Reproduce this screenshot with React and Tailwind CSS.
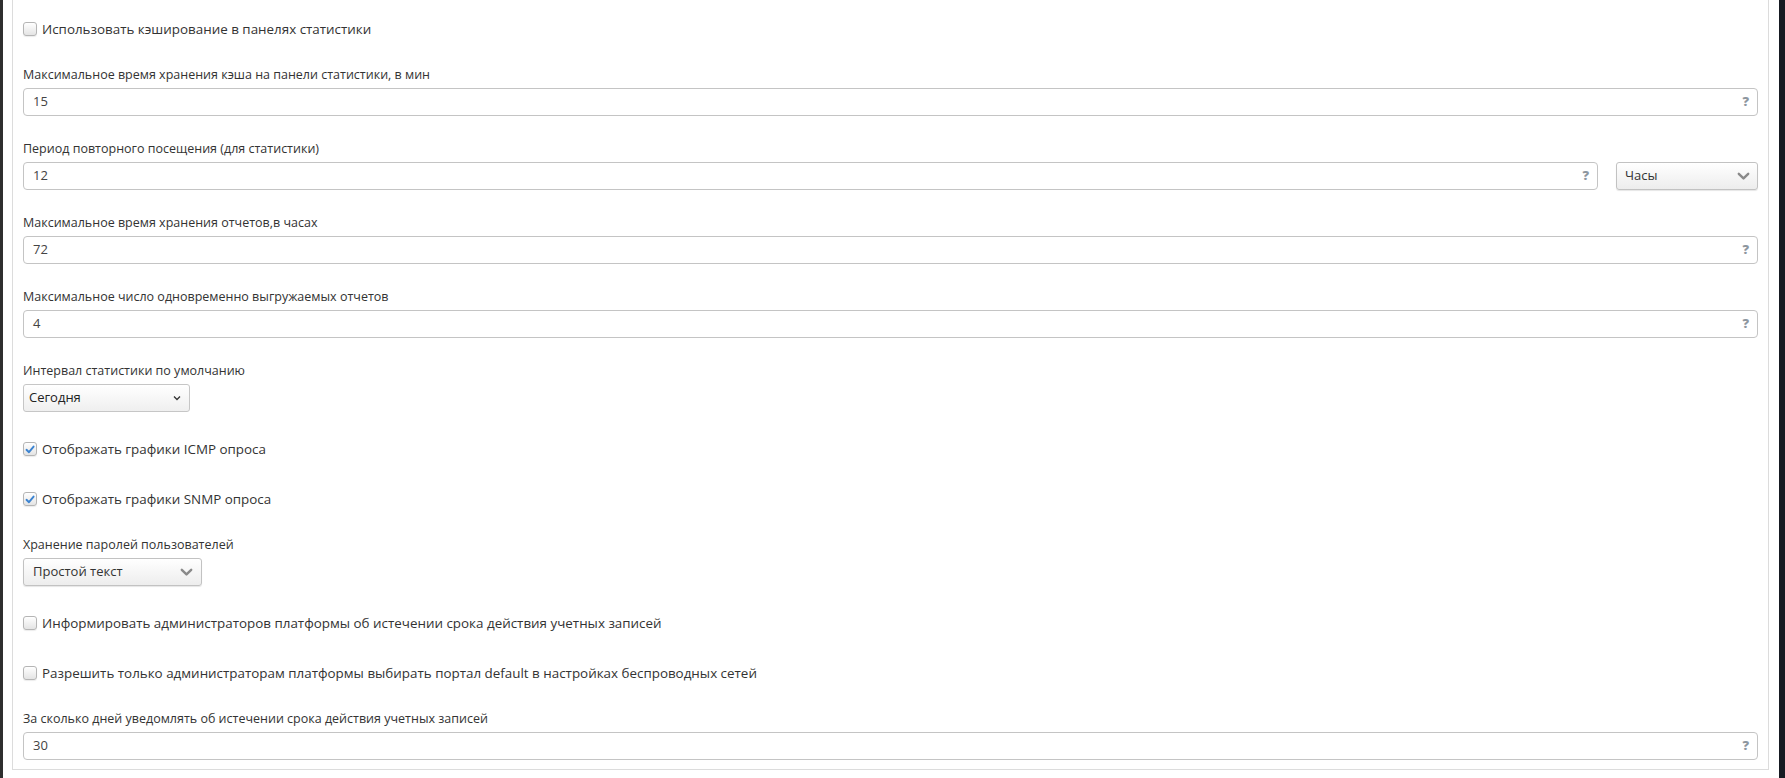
import React from "react";

const font = { fontFamily: '"Open Sans", "Noto Sans", sans-serif' };

function Check({ checked, label }) {
    return (
        <div className="flex items-center h-[26px] mb-6">
            <span className="w-[14px] h-[14px] rounded-[3px] border border-[#b5b5b5] bg-gradient-to-b from-white to-[#e4e4e4] flex items-center justify-center shadow-[0_1px_1px_rgba(0,0,0,0.08)]">
                {checked && (
                    <svg width="10" height="9" viewBox="0 0 10 9">
                        <path d="M1.5 4.8 L4 7.2 L8.6 1.6" fill="none" stroke="#3b83d1" strokeWidth="1.9" strokeLinecap="round" strokeLinejoin="round" />
                    </svg>
                )}
            </span>
            <span className="ml-[5px] text-[13.4px] text-[#333]">{label}</span>
        </div>
    );
}

function Label({ children }) {
    return <div className="h-[18px] mb-1 text-[12.5px] leading-[18px] text-[#333]">{children}</div>;
}

function Field({ value, className = "" }) {
    return (
        <div className={"flex items-center h-[28px] border border-[#c4c4c4] rounded-[4px] bg-white pl-[9px] pr-[8px] " + className}>
            <span className="flex-1 text-[13px] text-[#444]">{value}</span>
            <span className="text-[13px] font-extrabold text-[#8e979f]">?</span>
        </div>
    );
}

function Chevron() {
    return (
        <svg width="13" height="9" viewBox="0 0 13 9">
            <path d="M1.8 1.8 L6.5 6.4 L11.2 1.8" fill="none" stroke="#8a8a8a" strokeWidth="2.4" strokeLinecap="round" strokeLinejoin="round" />
        </svg>
    );
}

function FancySelect({ value, className = "" }) {
    return (
        <div className={"flex items-center justify-between h-[28px] border border-[#c2c2c2] rounded-[3px] bg-gradient-to-b from-white to-[#ededed] shadow-[0_1px_1px_rgba(0,0,0,0.1)] pl-[8px] pr-[7px] " + className}>
            <span className="text-[13px] text-[#333]">{value}</span>
            <Chevron />
        </div>
    );
}

export default function App() {
    return (
        <div className="flex h-[778px] bg-white overflow-hidden" style={font}>
            <div className="w-[3px] bg-[#2e2e2e]" />
            <div className="flex-1 pl-[9px] pr-[10px]">
                <div className="border-x border-b border-[#dcdcdc] px-[10px] pt-[16px] pb-[9px]">
                    <Check label="Использовать кэширование в панелях статистики" />

                    <div className="mb-6">
                        <Label>Максимальное время хранения кэша на панели статистики, в мин</Label>
                        <Field value="15" />
                    </div>

                    <div className="mb-6">
                        <Label>Период повторного посещения (для статистики)</Label>
                        <div className="flex gap-[18px]">
                            <Field value="12" className="flex-1" />
                            <FancySelect value="Часы" className="w-[142px]" />
                        </div>
                    </div>

                    <div className="mb-6">
                        <Label>Максимальное время хранения отчетов,в часах</Label>
                        <Field value="72" />
                    </div>

                    <div className="mb-6">
                        <Label>Максимальное число одновременно выгружаемых отчетов</Label>
                        <Field value="4" />
                    </div>

                    <div className="mb-6">
                        <Label>Интервал статистики по умолчанию</Label>
                        <div className="flex items-center justify-between w-[167px] h-[28px] border border-[#c6c6c6] rounded-[3px] bg-gradient-to-b from-white to-[#efefef] pl-[5px] pr-[8px]">
                            <span className="text-[13px] text-[#222]">Сегодня</span>
                            <svg width="8" height="6" viewBox="0 0 8 6">
                                <path d="M1 1.5 L4 4.5 L7 1.5" fill="none" stroke="#333" strokeWidth="1.3" />
                            </svg>
                        </div>
                    </div>

                    <Check checked label="Отображать графики ICMP опроса" />
                    <Check checked label="Отображать графики SNMP опроса" />

                    <div className="mb-6">
                        <Label>Хранение паролей пользователей</Label>
                        <FancySelect value="Простой текст" className="w-[179px] pl-[9px] pr-[8px]" />
                    </div>

                    <Check label="Информировать администраторов платформы об истечении срока действия учетных записей" />
                    <Check label="Разрешить только администраторам платформы выбирать портал default в настройках беспроводных сетей" />

                    <div>
                        <Label>За сколько дней уведомлять об истечении срока действия учетных записей</Label>
                        <Field value="30" />
                    </div>
                </div>
            </div>
            <div className="w-[6px] bg-[#161a22]" />
        </div>
    );
}
